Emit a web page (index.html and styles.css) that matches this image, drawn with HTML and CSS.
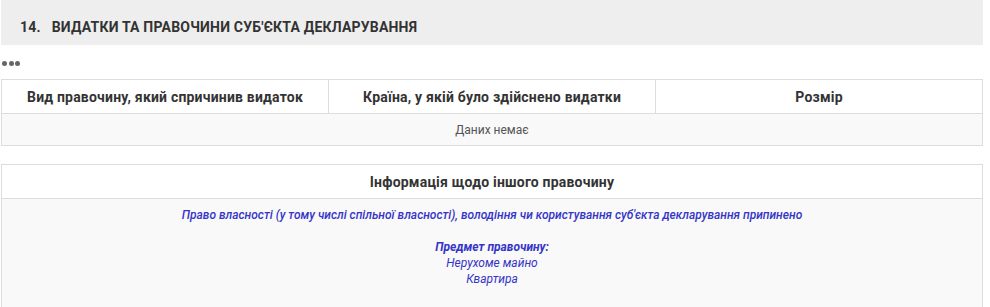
FILE: index.html
```html
<!DOCTYPE html>
<html lang="uk">
<head>
<meta charset="utf-8">
<link rel="stylesheet" href="styles.css">
</head>
<body>
<div class="page">
  <div class="section-head"><span class="num">14.</span><span>ВИДАТКИ ТА ПРАВОЧИНИ СУБ'ЄКТА ДЕКЛАРУВАННЯ</span></div>
  <div class="dots"><span class="dot"></span><span class="dot"></span><span class="dot"></span></div>
  <table class="grid">
    <thead>
      <tr><th>Вид правочину, який спричинив видаток</th><th>Країна, у якій було здійснено видатки</th><th>Розмір</th></tr>
    </thead>
    <tbody>
      <tr><td colspan="3" class="empty">Даних немає</td></tr>
    </tbody>
  </table>
  <table class="grid info">
    <thead>
      <tr><th>Інформація щодо іншого правочину</th></tr>
    </thead>
    <tbody>
      <tr><td class="info-body">
        <div class="line medium">Право власності (у тому числі спільної власності), володіння чи користування суб'єкта декларування припинено</div>
        <div class="line blank"></div>
        <div class="line strong">Предмет правочину:</div>
        <div class="line">Нерухоме майно</div>
        <div class="line">Квартира</div>
      </td></tr>
    </tbody>
  </table>
</div>
</body>
</html>
```
FILE: styles.css
```css
html, body { margin: 0; padding: 0; background: #fff; }
body { font-family: Roboto, "Noto Sans", sans-serif; color: #333; }
.page { width: 982px; margin-left: 1px; }
.section-head {
  height: 45px;
  box-sizing: border-box;
  background: #eeeeee;
  display: flex;
  align-items: center;
  padding: 8px 0 0 19px;
  font-size: 14px;
  font-weight: 700;
  color: #333;
  letter-spacing: 0.2px;
}
.section-head .num { margin-right: 11px; }
.dots {
  height: 34px;
  display: flex;
  align-items: center;
  gap: 1.5px;
  padding: 2px 0 0 1px;
  box-sizing: border-box;
}
.dot {
  width: 5px;
  height: 5px;
  border-radius: 50%;
  background: #666;
}
.grid {
  width: 982px;
  border-collapse: collapse;
  table-layout: fixed;
}
.grid th, .grid td { border: 1px solid #dddddd; }
.grid th {
  height: 33px;
  font-size: 14px;
  font-weight: 700;
  color: #333;
  background: #fff;
  padding: 0;
  text-align: center;
  letter-spacing: 0.2px;
}
.grid td.empty {
  height: 31px;
  font-size: 12px;
  color: #555;
  text-align: center;
  background: #f9f9f9;
  padding: 0;
}
.info { margin-top: 18px; }
.info-body {
  background: #f9f9f9;
  text-align: center;
  padding: 8px 0 30px;
  font-size: 12px;
  font-style: italic;
  color: #3535c8;
}
.line { line-height: 16px; height: 16px; }
.medium { font-weight: 500; }
.strong { font-weight: 700; }
```
